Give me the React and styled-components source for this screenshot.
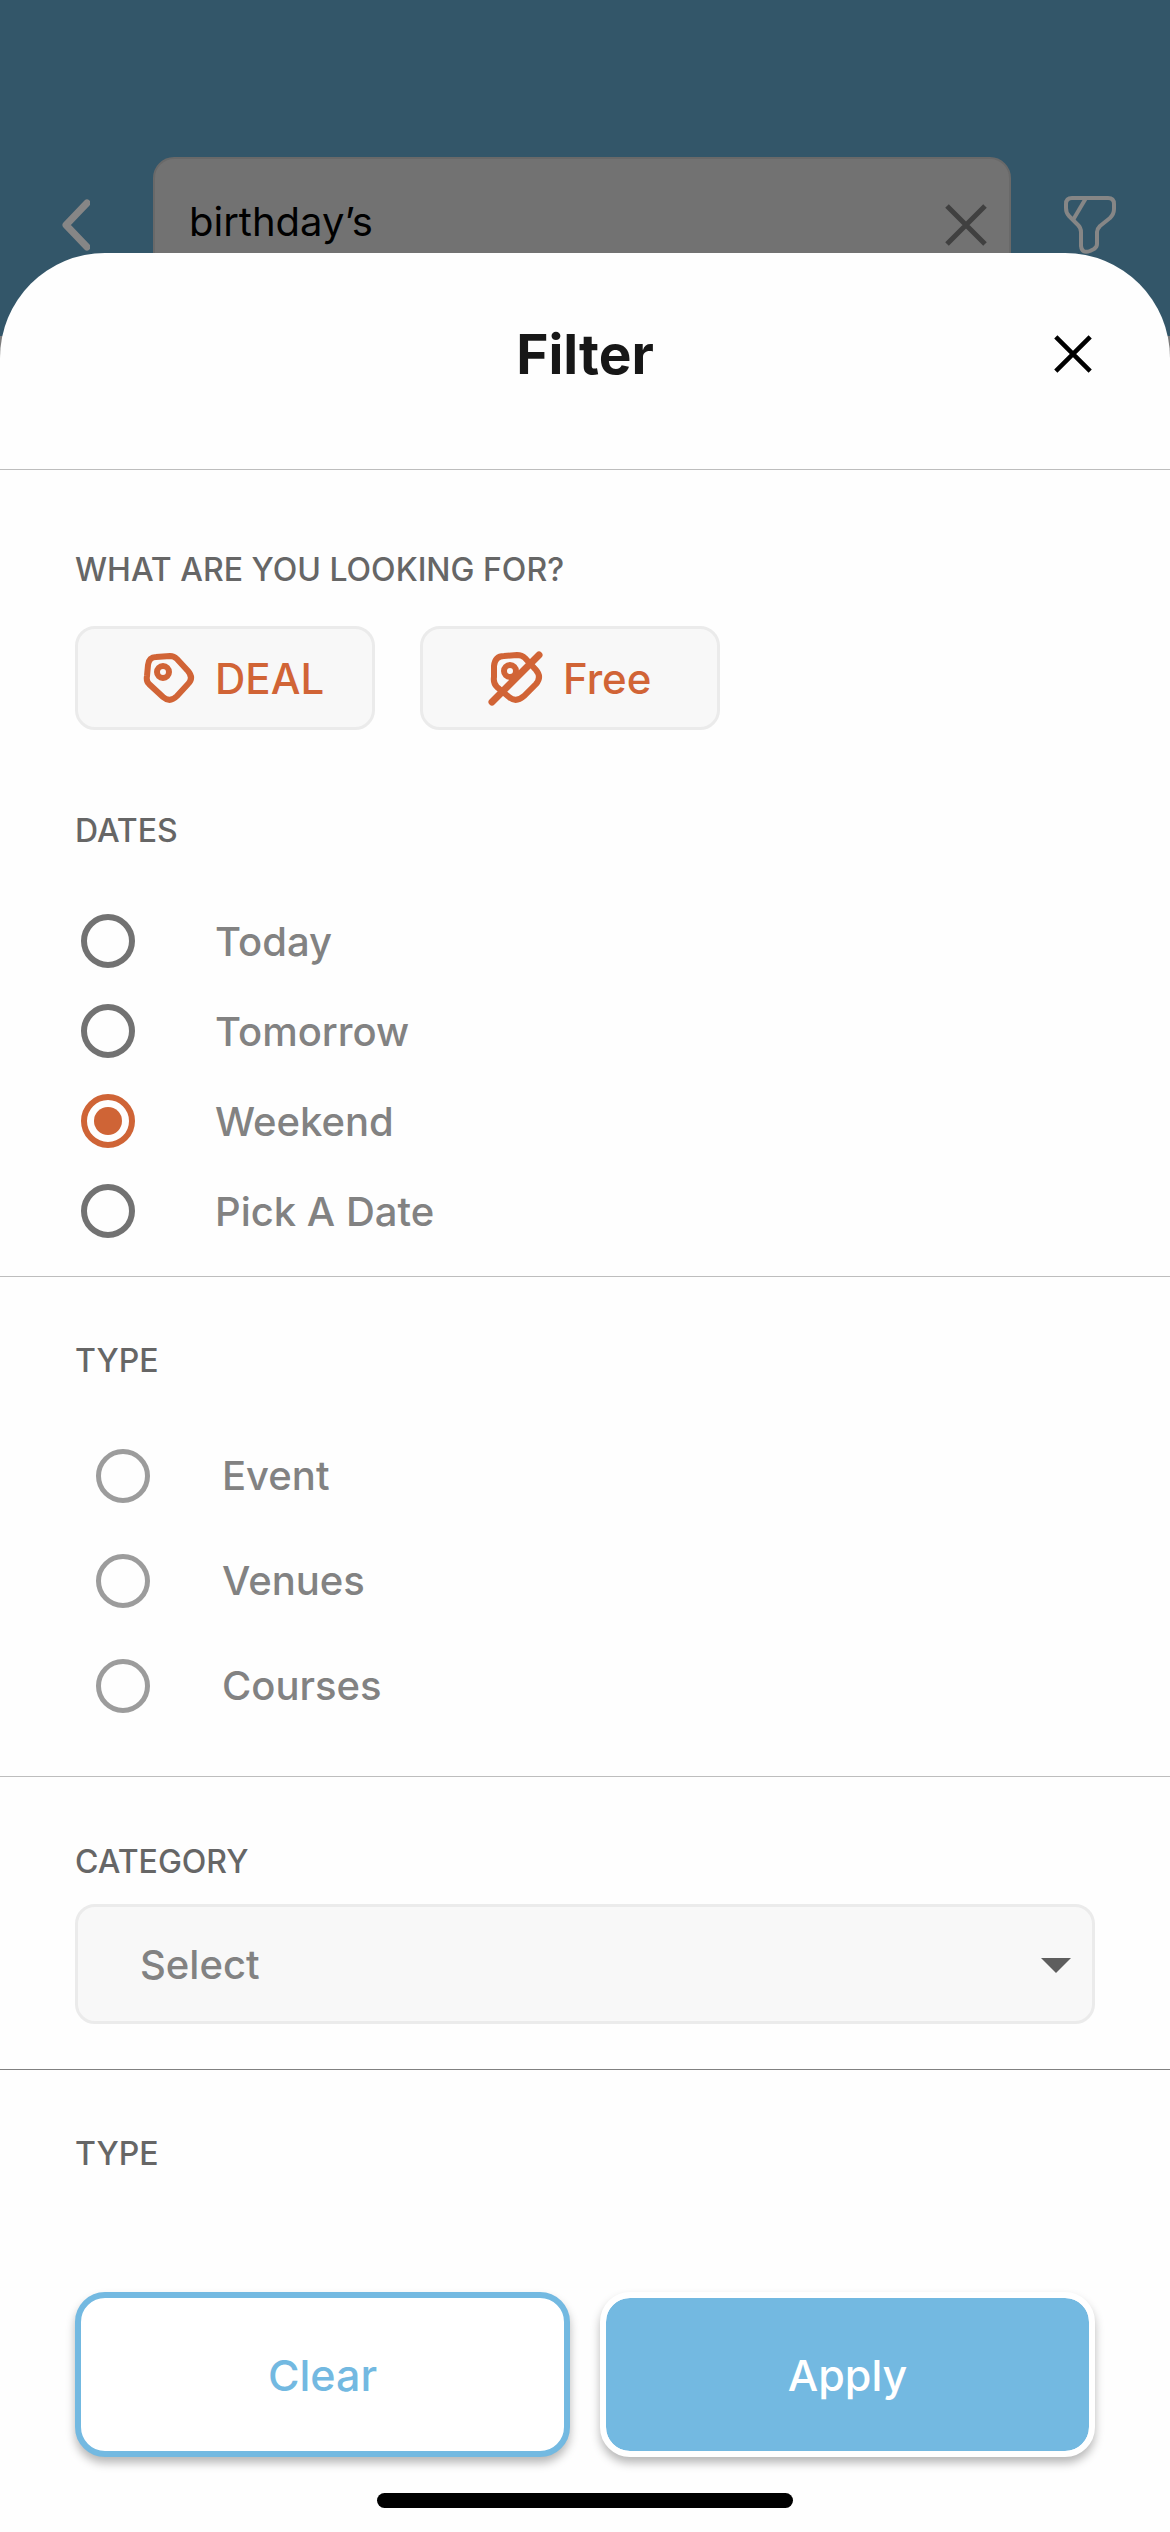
import React, { useState } from 'react';
import styled, { createGlobalStyle } from 'styled-components';

const dates = ['Today', 'Tomorrow', 'Weekend', 'Pick A Date'];
const types = ['Event', 'Venues', 'Courses'];

const TagIcon = () => (
  <svg width="52" height="52" viewBox="0 0 52 52" fill="none" stroke="currentColor" aria-hidden="true">
    <path strokeWidth="6" d="M13 5L27 4Q31 4 34 7L45 19Q51 26 45 32L34 44Q27 51 20 45L6 32Q3 29 4 24L5 13Q6 5 13 5Z" />
    <circle cx="20" cy="20" r="6" strokeWidth="6" />
  </svg>
);

const FreeIcon = () => (
  <svg width="55" height="55" viewBox="0 0 55 55" fill="none" stroke="currentColor" aria-hidden="true">
    <path strokeWidth="6" d="M16 5L29 4Q34 4 37 7L48 19Q54 26 48 33L36 45Q28 52 21 46L9 36Q5 32 6 26L6 15Q7 5 16 5Z" />
    <circle cx="22" cy="20" r="6" strokeWidth="6" />
    <path strokeWidth="7" strokeLinecap="round" d="M4 51L51 4" />
  </svg>
);

const CrossIcon = ({ size }) => (
  <svg width={size} height={size} viewBox="0 0 42 42" fill="none" stroke="currentColor" aria-hidden="true">
    <path strokeWidth="5" d="M2 2L40 40M40 2L2 40" />
  </svg>
);

const BackIcon = () => (
  <svg width="29" height="52" viewBox="0 0 29 52" fill="none" stroke="currentColor" aria-hidden="true">
    <path strokeWidth="7" strokeLinecap="round" strokeLinejoin="round" d="M26 4L5 26L26 48" />
  </svg>
);

const FunnelIcon = () => (
  <svg width="52" height="58" viewBox="0 0 52 58" fill="none" stroke="currentColor" aria-hidden="true">
    <path
      strokeWidth="4"
      strokeLinejoin="round"
      d="M8 2H44Q50 2 50 8V13Q50 18 46 22L36 30Q33 33 33 36V48Q33 51 30 53L26 55Q18 58 17 50V36Q17 32 14 29L5 20Q2 17 2 12V8Q2 2 8 2Z"
    />
    <path strokeWidth="4" d="M22 2L9 24" />
  </svg>
);

function RadioGroup({ name, options, value, onChange, variant }) {
  return (
    <Options $variant={variant}>
      {options.map((option) => (
        <Option key={option} $variant={variant}>
          <Radio
            type="radio"
            name={name}
            value={option}
            checked={value === option}
            onChange={() => onChange(option)}
            $variant={variant}
          />
          {option}
        </Option>
      ))}
    </Options>
  );
}

export default function App() {
  const [search, setSearch] = useState('birthday’s');
  const [date, setDate] = useState('Weekend');
  const [type, setType] = useState('');

  const clear = () => {
    setDate('');
    setType('');
  };

  return (
    <>
      <GlobalStyle />
      <Screen>
        <AppBar>
          <IconButton aria-label="Back"><BackIcon /></IconButton>
          <SearchBox>
            <SearchInput
              aria-label="Search"
              value={search}
              onChange={(e) => setSearch(e.target.value)}
            />
            <ClearSearch aria-label="Clear search" onClick={() => setSearch('')}>
              <CrossIcon size={42} />
            </ClearSearch>
          </SearchBox>
          <IconButton aria-label="Filter"><FunnelIcon /></IconButton>
        </AppBar>

        <Sheet>
          <SheetHeader>
            <Title>Filter</Title>
            <CloseButton aria-label="Close">
              <CrossIcon size={38} />
            </CloseButton>
          </SheetHeader>

          <Section $top={80} $bottom={20}>
            <Heading>WHAT ARE YOU LOOKING FOR?</Heading>
            <Chips>
              <Chip><TagIcon />DEAL</Chip>
              <Chip><FreeIcon />Free</Chip>
            </Chips>
            <Heading>DATES</Heading>
            <RadioGroup name="date" options={dates} value={date} onChange={setDate} variant="dense" />
          </Section>

          <Section $top={64} $bottom={38}>
            <Heading>TYPE</Heading>
            <RadioGroup name="type" options={types} value={type} onChange={setType} variant="loose" />
          </Section>

          <Section $top={65} $bottom={45} $line="#808080">
            <Heading as="label" htmlFor="category">CATEGORY</Heading>
            <SelectBox>
              <Select id="category">
                <option>Select</option>
              </Select>
              <Arrow width="30" height="15" viewBox="0 0 30 15" aria-hidden="true">
                <path d="M0 0H30L15 15Z" fill="#5e5e5e" />
              </Arrow>
            </SelectBox>
          </Section>

          <Section $top={64} $bottom={0} $line="transparent">
            <Heading>TYPE</Heading>
          </Section>

          <Footer>
            <Action onClick={clear}>Clear</Action>
            <Action $filled>Apply</Action>
          </Footer>
          <HomeIndicator />
        </Sheet>
      </Screen>
    </>
  );
}

const GlobalStyle = createGlobalStyle`
  * {
    box-sizing: border-box;
  }

  body {
    margin: 0;
    font-family: Inter, 'Open Sans', sans-serif;
  }

  button, input, select {
    font-family: inherit;
  }
`;

const Screen = styled.div`
  display: flex;
  flex-direction: column;
  min-height: 100vh;
  background: #7c7c7c;
`;

const AppBar = styled.header`
  display: flex;
  align-items: center;
  height: 336px;
  padding: 157px 54px 43px 61px;
  background: #335669;
`;

const IconButton = styled.button`
  display: flex;
  padding: 0;
  border: none;
  background: none;
  color: #868686;
  cursor: pointer;
`;

const SearchBox = styled.div`
  flex: 1;
  display: flex;
  align-items: center;
  height: 136px;
  margin: 0 53px 0 63px;
  padding: 0 22px 0 34px;
  border: 2px solid #696969;
  border-radius: 21px;
  background: #727272;
`;

const SearchInput = styled.input`
  flex: 1;
  min-width: 0;
  height: 60px;
  margin-bottom: 8px;
  padding: 0;
  border: none;
  outline: none;
  background: none;
  color: #000;
  font-size: 40px;
`;

const ClearSearch = styled(IconButton)`
  color: #404040;
`;

const Sheet = styled.main`
  flex: 1;
  display: flex;
  flex-direction: column;
  margin-top: -83px;
  border-radius: 105px 105px 0 0;
  background: #fefefe;
`;

const SheetHeader = styled.div`
  display: grid;
  grid-template-columns: 1fr auto 1fr;
  align-items: center;
  height: 217px;
  padding: 0 78px 14px;
  border-bottom: 1px solid #bdbdbd;
`;

const Title = styled.h1`
  grid-column: 2;
  margin: 0;
  color: #171717;
  font-size: 55px;
  font-weight: 700;
  line-height: 60px;
`;

const CloseButton = styled(IconButton)`
  justify-self: end;
  color: #000;
`;

const Section = styled.section`
  padding: ${({ $top, $bottom }) => `${$top}px 75px ${$bottom}px`};
  border-bottom: 1px solid ${({ $line }) => $line || '#bdbdbd'};
`;

const Heading = styled.h2`
  display: block;
  margin: 0;
  color: #666;
  font-size: 32px;
  font-weight: 500;
  line-height: 40px;
`;

const Chips = styled.div`
  display: flex;
  gap: 45px;
  margin: 36px 0 81px;
`;

const Chip = styled.button`
  display: flex;
  align-items: center;
  gap: 20px;
  width: 300px;
  height: 104px;
  padding: 0 0 0 65px;
  border: 3px solid #ebebeb;
  border-radius: 20px;
  background: #f8f8f8;
  color: #d16436;
  font-size: 42px;
  font-weight: 500;
  cursor: pointer;
`;

const Options = styled.div`
  padding: ${({ $variant }) => ($variant === 'dense' ? '45px 6px 0' : '42px 21px 0')};
`;

const Option = styled.label`
  display: flex;
  align-items: center;
  gap: ${({ $variant }) => ($variant === 'dense' ? 80 : 72)}px;
  height: ${({ $variant }) => ($variant === 'dense' ? 90 : 105)}px;
  color: #828282;
  font-size: 40px;
  font-weight: 500;
  cursor: pointer;
`;

const Radio = styled.input`
  appearance: none;
  flex: none;
  width: 54px;
  height: 54px;
  margin: 0;
  padding: 7px;
  border: ${({ $variant }) => ($variant === 'dense' ? '6px solid #727272' : '5px solid #9c9c9c')};
  border-radius: 50%;

  &:checked {
    border-color: #cf6436;
    background: #cf6436 content-box;
  }
`;

const SelectBox = styled.div`
  position: relative;
  margin-top: 22px;
`;

const Select = styled.select`
  appearance: none;
  display: block;
  width: 100%;
  height: 120px;
  padding: 0 62px;
  border: 3px solid #ebebeb;
  border-radius: 20px;
  background: #f8f8f8;
  color: #828282;
  font-size: 40px;
  font-weight: 500;
`;

const Arrow = styled.svg`
  position: absolute;
  top: 54px;
  right: 24px;
  pointer-events: none;
`;

const Footer = styled.div`
  display: flex;
  gap: 30px;
  margin-top: auto;
  padding: 0 75px;
`;

const Action = styled.button`
  flex: 1;
  height: 165px;
  border: 6px solid ${({ $filled }) => ($filled ? '#fff' : '#73b9e1')};
  border-radius: 30px;
  background: ${({ $filled }) => ($filled ? '#73b9e1' : '#fff')};
  background-clip: padding-box;
  box-shadow: 0 6px 10px rgba(0, 0, 0, 0.28);
  color: ${({ $filled }) => ($filled ? '#fff' : '#73b9e1')};
  font-size: 43px;
  font-weight: 500;
  cursor: pointer;
`;

const HomeIndicator = styled.div`
  width: 416px;
  height: 15px;
  margin: 36px auto 24px;
  border-radius: 8px;
  background: #000;
`;
